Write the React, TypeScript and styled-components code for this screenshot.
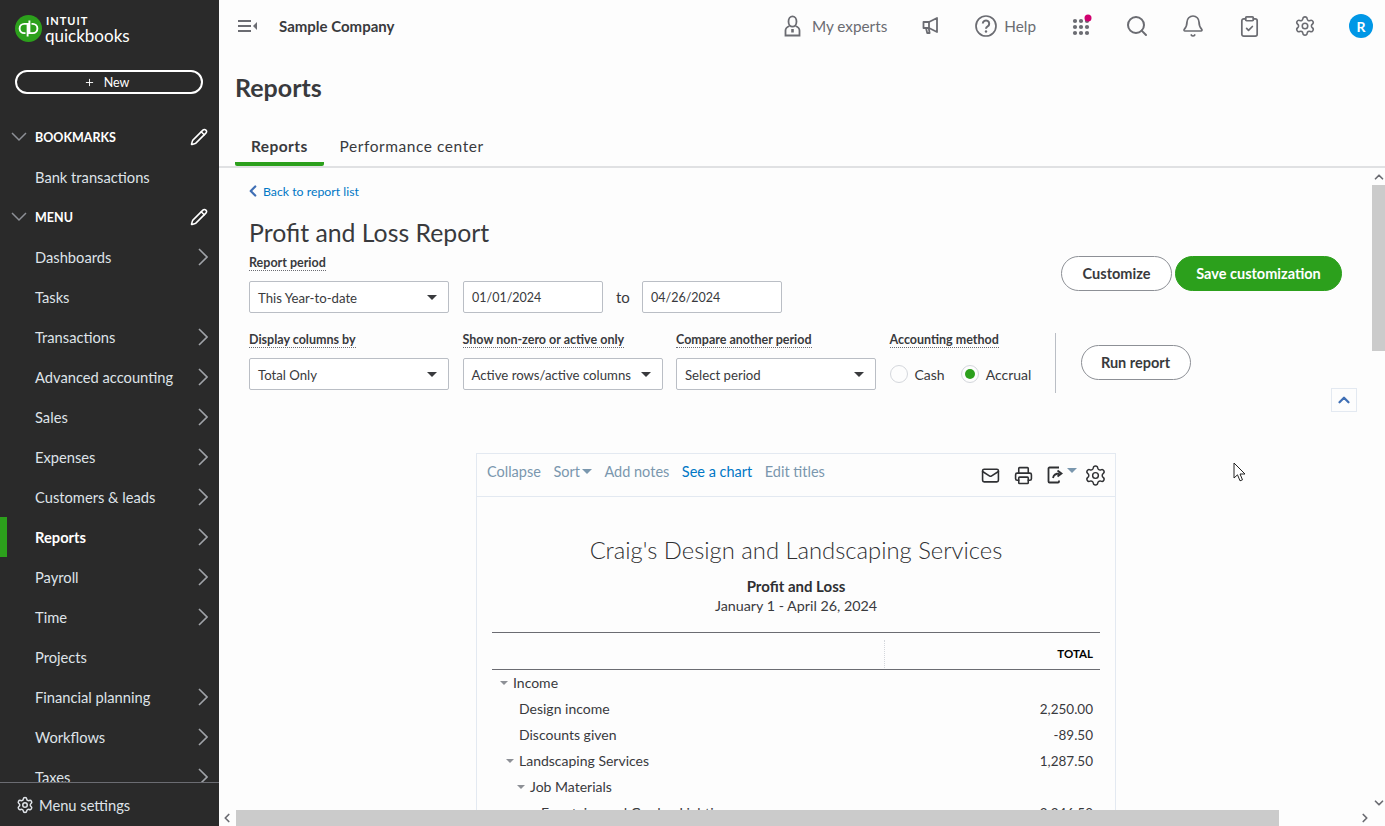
import React from 'react';
import styled, { createGlobalStyle } from 'styled-components';
import {
  Bell,
  ChevronDown,
  ChevronLeft,
  ChevronRight,
  ChevronUp,
  ClipboardCheck,
  Mail,
  Pencil,
  Plus,
  Printer,
  Search,
  Settings,
} from 'lucide-react';

const GlobalStyle = createGlobalStyle`
  html, body, #root {
    margin: 0;
    padding: 0;
    height: 100%;
  }
  body {
    font-family: Lato, "Open Sans", "Liberation Sans", sans-serif;
    color: #393a3d;
    background: #fdfdfd;
    overflow: hidden;
  }
  * { box-sizing: border-box; }
`;

const Page = styled.div`
  display: flex;
  height: 100vh;
  overflow: hidden;
`;

/* sidebar */
const Sidebar = styled.aside`
  width: 219px;
  flex-shrink: 0;
  background: #2a2a2a;
  color: #eceef1;
  display: flex;
  flex-direction: column;
`;

const LogoRow = styled.div`
  height: 70px;
  padding: 15px 0 0 15px;
  display: flex;
  gap: 3px;
  align-items: flex-start;
`;

const LogoText = styled.div`
  display: flex;
  flex-direction: column;
  color: #fff;
`;

const Intuit = styled.span`
  font-size: 11px;
  line-height: 12px;
  font-weight: 700;
  letter-spacing: 1px;
  margin-left: 1px;
`;

const QuickBooks = styled.span`
  font-size: 17px;
  line-height: 18px;
  font-weight: 400;
`;

const NewButton = styled.button`
  width: 188px;
  height: 24px;
  margin: 0 0 23px 15px;
  flex-shrink: 0;
  border: 2px solid #fff;
  border-radius: 12px;
  background: transparent;
  color: #fff;
  font: 400 12.5px Lato, sans-serif;
  display: flex;
  align-items: center;
  justify-content: center;
  gap: 9px;
  padding: 0 5px 0 0;
`;

const Nav = styled.nav`
  flex: 1;
  min-height: 0;
  overflow: hidden;
`;

const NavRow = styled.div<{ $active?: boolean }>`
  height: 40px;
  display: flex;
  align-items: center;
  justify-content: space-between;
  padding: 0 11px 1px 35px;
  font-size: 14.7px;
  font-weight: ${(p) => (p.$active ? 700 : 400)};
  color: ${(p) => (p.$active ? '#fff' : '#dfe3e8')};
  border-left: ${(p) => (p.$active ? '7px solid #2ca01c' : 'none')};
  padding-left: ${(p) => (p.$active ? '28px' : '35px')};
`;

const SectionRow = styled.div`
  height: 40px;
  display: flex;
  align-items: center;
  padding: 0 11px 0 11px;
  font-size: 12.5px;
  font-weight: 700;
  color: #fff;
`;

const SectionLabel = styled.span`
  flex: 1;
  margin-left: 8px;
`;

const MenuFooter = styled.div`
  height: 44px;
  flex-shrink: 0;
  border-top: 1px solid #6b6c72;
  display: flex;
  align-items: center;
  gap: 5px;
  padding-left: 16px;
  font-size: 14.7px;
  color: #dfe3e8;
`;

/* main */
const Main = styled.main`
  flex: 1;
  min-width: 0;
  display: flex;
  flex-direction: column;
  position: relative;
`;

const TopBar = styled.header`
  height: 52px;
  flex-shrink: 0;
  display: flex;
  align-items: center;
  padding: 0 12px 0 19px;
`;

const CompanyName = styled.span`
  margin-left: 21px;
  margin-bottom: 1px;
  font-size: 15px;
  font-weight: 700;
  color: #393a3d;
`;

const TopActions = styled.div`
  margin-left: auto;
  display: flex;
  align-items: center;
  gap: 32px;
  color: #6b6c72;
`;

const TopLink = styled.div<{ $gap: number; $end?: number }>`
  display: flex;
  align-items: center;
  gap: ${(p) => p.$gap}px;
  margin-right: ${(p) => p.$end ?? 0}px;
  font-size: 15.3px;
  line-height: 22px;
  color: #6b6c72;
`;

const IconSlot = styled.div`
  width: 24px;
  height: 24px;
  display: flex;
  align-items: center;
  justify-content: center;
  position: relative;
`;

const Avatar = styled.div`
  width: 24px;
  height: 24px;
  border-radius: 50%;
  background: #0097e6;
  color: #fff;
  font-size: 14px;
  font-weight: 700;
  display: flex;
  align-items: center;
  justify-content: center;
`;

const PageTitle = styled.h1`
  margin: 19px 0 0 16px;
  font-size: 25px;
  line-height: 32px;
  font-weight: 700;
  color: #393a3d;
`;

const Tabs = styled.div`
  margin-top: 25px;
  height: 40px;
  flex-shrink: 0;
  padding-left: 16px;
  display: flex;
  border-bottom: 2px solid #e0e1e3;
`;

const Tab = styled.div<{ $active?: boolean }>`
  padding: 8px 16px 0;
  height: 38px;
  font-size: 15.5px;
  line-height: 20px;
  letter-spacing: ${(p) => (p.$active ? '0.4px' : '0.55px')};
  font-weight: ${(p) => (p.$active ? 700 : 400)};
  color: #393a3d;
  border-bottom: 4px solid ${(p) => (p.$active ? '#2ca01c' : 'transparent')};
  border-radius: 0 0 2px 2px;
`;

const Body = styled.div`
  flex: 1;
  min-height: 0;
  display: flex;
`;

const Content = styled.div`
  flex: 1;
  min-width: 0;
  overflow: hidden;
  padding: 15px 0 0 30px;
`;

const BackLink = styled.div`
  display: flex;
  align-items: center;
  gap: 1px;
  height: 16px;
  font-size: 12.3px;
  color: #0077c5;
`;

const ReportTitle = styled.h2`
  margin: 18px 0 0;
  font-size: 24.8px;
  line-height: 32px;
  font-weight: 400;
  color: #393a3d;
`;

const TopFilters = styled.div`
  margin-top: 6px;
  display: flex;
  justify-content: space-between;
  align-items: flex-start;
  padding-right: 30px;
`;

const Label = styled.span`
  display: inline-block;
  height: 16px;
  padding-top: 1px;
  font-size: 12.5px;
  line-height: 14px;
  font-weight: 700;
  color: #393a3d;
  border-bottom: 1px dotted #6b6c72;
`;

const Field = styled.div<{ $width?: number }>`
  display: flex;
  flex-direction: column;
  align-items: flex-start;
  gap: 10px;
  width: ${(p) => (p.$width ? `${p.$width}px` : 'auto')};
`;

const ControlRow = styled.div`
  display: flex;
  align-items: center;
  gap: 14px;
`;

const Box = styled.div<{ $width: number }>`
  width: ${(p) => p.$width}px;
  height: 32px;
  border: 1px solid #babec5;
  border-radius: 2px;
  background: #fff;
  display: flex;
  align-items: center;
  justify-content: space-between;
  padding: 1px 11px 0 8px;
  font-size: 13.2px;
  color: #393a3d;
`;

const DateBox = styled(Box)`
  font-size: 12.5px;
  padding-top: 0;
`;

const Caret = styled.span<{ $size?: number; $color?: string }>`
  width: 0;
  height: 0;
  flex-shrink: 0;
  border-left: ${(p) => p.$size ?? 5}px solid transparent;
  border-right: ${(p) => p.$size ?? 5}px solid transparent;
  border-top: ${(p) => p.$size ?? 5}px solid ${(p) => p.$color ?? '#393a3d'};
`;

const ToText = styled.span`
  width: 13px;
  margin: 0 -1px;
  font-size: 15px;
  color: #393a3d;
  text-align: center;
`;

const Actions = styled.div`
  display: flex;
  gap: 3px;
  margin-top: 1px;
`;

const PillButton = styled.button<{ $primary?: boolean; $width: number }>`
  width: ${(p) => p.$width}px;
  height: 35px;
  border-radius: 18px;
  border: 1px solid ${(p) => (p.$primary ? '#2ca01c' : '#8d9096')};
  background: ${(p) => (p.$primary ? '#2ca01c' : '#fff')};
  color: ${(p) => (p.$primary ? '#fff' : '#393a3d')};
  font: 700 14.5px Lato, sans-serif;
  padding: 0;
`;

const BottomFilters = styled.div`
  margin-top: 19px;
  height: 80px;
  display: flex;
  align-items: flex-start;
  padding-right: 15px;
`;

const FieldGroup = styled.div`
  display: flex;
  gap: 13.5px;
`;

const Radios = styled.div`
  height: 32px;
  display: flex;
  align-items: center;
  font-size: 14px;
  color: #393a3d;
`;

const RadioDot = styled.span<{ $on?: boolean }>`
  width: 18px;
  height: 18px;
  border-radius: 50%;
  border: 1px solid #d4d7dc;
  margin: 0 7px 0 ${(p) => (p.$on ? 16 : 0)}px;
  display: flex;
  align-items: center;
  justify-content: center;
  &::after {
    content: '';
    width: 10px;
    height: 10px;
    border-radius: 50%;
    background: ${(p) => (p.$on ? '#2ca01c' : 'transparent')};
  }
`;

const VDivider = styled.div`
  width: 1px;
  height: 60px;
  margin: 1px 25px 0 22px;
  background: #babec5;
`;

const RunWrap = styled.div`
  margin-top: 13px;
`;

const CollapseUp = styled.div`
  width: 26px;
  height: 24px;
  margin-left: auto;
  align-self: flex-end;
  border: 1px solid #e3e9f1;
  display: flex;
  align-items: center;
  justify-content: center;
  color: #3f6fb5;
`;

const Card = styled.section`
  width: 640px;
  margin: 41px 0 0 227px;
  border: 1px solid #e3e9f1;
  border-bottom: none;
`;

const CardBar = styled.div`
  height: 43px;
  display: flex;
  align-items: center;
  gap: 12.5px;
  padding: 0 10px;
  border-bottom: 1px solid #e3e9f1;
  font-size: 14.5px;
`;

const BarLink = styled.span<{ $live?: boolean }>`
  color: ${(p) => (p.$live ? '#0077c5' : '#7a97ae')};
  display: flex;
  align-items: center;
  gap: 2px;
  margin-bottom: 7px;
`;

const BarIcons = styled.div`
  margin-left: auto;
  display: flex;
  align-items: center;
  gap: 14px;
  margin-right: -2px;
  color: #2f3033;
`;

const ShareGroup = styled.div`
  display: flex;
  align-items: flex-start;
  gap: 2px;
  margin-right: -7px;
`;

const ShareCaret = styled(Caret)`
  margin-top: 2px;
`;

const CardBody = styled.div`
  padding: 38px 15px 0;
  text-align: center;
`;

const Company = styled.div`
  font-size: 23.8px;
  line-height: 30px;
  font-weight: 300;
  color: #2f3033;
`;

const ReportName = styled.div`
  margin-top: 11px;
  font-size: 15px;
  line-height: 20px;
  font-weight: 700;
  color: #2f3033;
`;

const ReportDates = styled.div`
  margin-top: 1px;
  font-size: 14.3px;
  line-height: 18px;
  color: #393a3d;
`;

const TableHead = styled.div`
  margin-top: 17px;
  height: 38px;
  border-top: 1px solid #6b6c72;
  border-bottom: 1px solid #6b6c72;
  display: flex;
  justify-content: flex-end;
`;

const TotalCell = styled.div`
  width: 216px;
  margin-top: 7px;
  height: 28px;
  border-left: 1px dotted #d4d7dc;
  font-size: 11.5px;
  font-weight: 700;
  color: #000;
  display: flex;
  align-items: center;
  justify-content: flex-end;
  padding: 0 7px 2px 0;
`;

const Row = styled.div<{ $indent: number }>`
  height: 26px;
  display: flex;
  align-items: center;
  padding: 0 7px 1px ${(p) => p.$indent}px;
  font-size: 14px;
  color: #393a3d;
  text-align: left;
`;

const RowCaret = styled.span<{ $show: boolean }>`
  width: 8px;
  height: 0;
  margin-right: 5px;
  border-left: 4px solid transparent;
  border-right: 4px solid transparent;
  border-top: 4px solid ${(p) => (p.$show ? '#8d9096' : 'transparent')};
`;

const RowAmount = styled.span`
  margin-left: auto;
  font-size: 13.5px;
`;

const VBar = styled.div`
  width: 13px;
  flex-shrink: 0;
  display: flex;
  flex-direction: column;
  align-items: center;
  justify-content: space-between;
  color: #6b6c72;
  padding-top: 2px;
`;

const VThumb = styled.div`
  width: 13px;
  height: 166px;
  margin-top: 1px;
  background: #cbcbcb;
  flex-shrink: 0;
`;

const VTrack = styled.div`
  flex: 1;
  display: flex;
  flex-direction: column;
  align-items: center;
`;

const HBar = styled.div`
  height: 16px;
  flex-shrink: 0;
  display: flex;
  align-items: center;
  color: #6b6c72;
  background: #fdfdfd;
`;

const HThumb = styled.div`
  width: 1043px;
  height: 16px;
  background: #cbcbcb;
  margin: 0 79px 0 2px;
  flex-shrink: 0;
`;

const Pointer = styled.svg`
  position: absolute;
  left: 1014px;
  top: 462px;
`;

const bookmarks = ['Bank transactions'];
const menu: { name: string; more?: boolean; active?: boolean }[] = [
  { name: 'Dashboards', more: true },
  { name: 'Tasks' },
  { name: 'Transactions', more: true },
  { name: 'Advanced accounting', more: true },
  { name: 'Sales', more: true },
  { name: 'Expenses', more: true },
  { name: 'Customers & leads', more: true },
  { name: 'Reports', more: true, active: true },
  { name: 'Payroll', more: true },
  { name: 'Time', more: true },
  { name: 'Projects' },
  { name: 'Financial planning', more: true },
  { name: 'Workflows', more: true },
  { name: 'Taxes', more: true },
];

const rows = [
  { label: 'Income', indent: 8, caret: true, amount: '' },
  { label: 'Design income', indent: 14, caret: false, amount: '2,250.00' },
  { label: 'Discounts given', indent: 14, caret: false, amount: '-89.50' },
  { label: 'Landscaping Services', indent: 14, caret: true, amount: '1,287.50' },
  { label: 'Job Materials', indent: 25, caret: true, amount: '' },
  { label: 'Fountains and Garden Lighting', indent: 36, caret: false, amount: '2,246.50' },
];

const QbLogo = () => (
  <svg width="27" height="27" viewBox="0 0 27 27" fill="none">
    <circle cx="13.5" cy="13.5" r="13.5" fill="#2ca01c" />
    <path
      d="M12.6 21.500V8.900H9.200a4.600 4.600 0 0 0 0 9.200h1.300M14.400 5.500v12.600h3.400a4.600 4.600 0 0 0 0-9.200h-1.300"
      stroke="#fff"
      strokeWidth="1.900"
    />
  </svg>
);

const SectionChevron = () => (
  <svg width="16" height="10" viewBox="0 0 16 10" fill="none" stroke="#8d9096" strokeWidth="1.500">
    <path d="M1 1l7 7 7-7" />
  </svg>
);

const NavChevron = () => (
  <svg width="10" height="18" viewBox="0 0 10 18" fill="none" stroke="#a0a3a8" strokeWidth="1.600">
    <path d="M1 1l8 8-8 8" />
  </svg>
);

const CollapseMenuIcon = () => (
  <svg width="20" height="14" viewBox="0 0 20 14" fill="#6b6c72">
    <rect x="0" y="1" width="13" height="2" />
    <rect x="0" y="6" width="13" height="2" />
    <rect x="0" y="11" width="13" height="2" />
    <path d="M19 3v8l-4-4z" />
  </svg>
);

const ExpertIcon = () => (
  <svg width="17" height="22" viewBox="0 0 17 22" fill="none" stroke="#6b6c72" strokeWidth="1.800">
    <ellipse cx="8.500" cy="6.500" rx="4" ry="5.200" />
    <path d="M5.500 11C2.800 12 1.500 13.500 1.500 15.500v5h14v-5c0-2-1.300-3.500-4-4.500" />
    <path d="M8.500 14v3.500" strokeWidth="2.600" />
  </svg>
);

const MegaphoneIcon = () => (
  <svg width="18" height="20" viewBox="0 0 18 20" fill="none" stroke="#6b6c72" strokeWidth="1.800" strokeLinejoin="round">
    <path d="M1.500 6H7l8-4v14l-8-4H1.500z" />
    <path d="M7 6v6" />
    <path d="M4 12l1.200 5h2.400l-.8-4.600" />
  </svg>
);

const HelpIcon = () => (
  <svg width="22" height="22" viewBox="0 0 22 22" fill="none" stroke="#6b6c72" strokeWidth="1.700">
    <circle cx="11" cy="11" r="10" />
    <path d="M7.800 8.600a3.200 3.200 0 1 1 4.800 2.800c-1.100.6-1.600 1.200-1.600 2.400" strokeWidth="2" />
    <circle cx="11" cy="16.500" r="1.200" fill="#6b6c72" stroke="none" />
  </svg>
);

const AppsIcon = () => (
  <svg width="24" height="24" viewBox="0 0 24 24" fill="#6b6c72">
    {[7, 13, 19].map((y) =>
      [6, 12, 18].map((x) => <circle key={`${x}-${y}`} cx={x} cy={y} r="2.100" />),
    )}
    <circle cx="19" cy="4" r="3.500" fill="#d0006f" />
  </svg>
);

const ShareIcon = () => (
  <svg width="18" height="18" viewBox="0 0 18 18" fill="none" stroke="#2f3033" strokeWidth="1.800">
    <path d="M12 1.500H2.500a1 1 0 0 0-1 1v13a1 1 0 0 0 1 1H11a1 1 0 0 0 1-1v-1" />
    <path d="M6 12c.5-3 3-4.500 6.500-4.500M10.500 4.500l4 3-4 3" />
  </svg>
);

const App = () => {
  return (
    <Page>
      <GlobalStyle />
      <Sidebar>
        <LogoRow>
          <QbLogo />
          <LogoText>
            <Intuit>INTUIT</Intuit>
            <QuickBooks>quickbooks</QuickBooks>
          </LogoText>
        </LogoRow>
        <NewButton>
          <Plus size={11} />
          New
        </NewButton>
        <Nav>
          <SectionRow>
            <SectionChevron />
            <SectionLabel>BOOKMARKS</SectionLabel>
            <Pencil size={18} />
          </SectionRow>
          {bookmarks.map((b) => (
            <NavRow key={b}>{b}</NavRow>
          ))}
          <SectionRow>
            <SectionChevron />
            <SectionLabel>MENU</SectionLabel>
            <Pencil size={18} />
          </SectionRow>
          {menu.map((m) => (
            <NavRow key={m.name} $active={m.active}>
              {m.name}
              {m.more && <NavChevron />}
            </NavRow>
          ))}
        </Nav>
        <MenuFooter>
          <Settings size={18} />
          Menu settings
        </MenuFooter>
      </Sidebar>
      <Main>
        <TopBar>
          <CollapseMenuIcon />
          <CompanyName>Sample Company</CompanyName>
          <TopActions>
            <TopLink $gap={11}>
              <ExpertIcon />
              My experts
            </TopLink>
            <IconSlot>
              <MegaphoneIcon />
            </IconSlot>
            <TopLink $gap={7} $end={1}>
              <HelpIcon />
              Help
            </TopLink>
            <IconSlot>
              <AppsIcon />
            </IconSlot>
            <IconSlot>
              <Search size={24} strokeWidth={2} />
            </IconSlot>
            <IconSlot>
              <Bell size={24} strokeWidth={1.7} />
            </IconSlot>
            <IconSlot>
              <ClipboardCheck size={23} strokeWidth={1.8} />
            </IconSlot>
            <IconSlot>
              <Settings size={22} strokeWidth={1.7} />
            </IconSlot>
            <Avatar>R</Avatar>
          </TopActions>
        </TopBar>
        <PageTitle>Reports</PageTitle>
        <Tabs>
          <Tab $active>Reports</Tab>
          <Tab>Performance center</Tab>
        </Tabs>
        <Body>
          <Content>
            <BackLink>
              <ChevronLeft size={18} strokeWidth={3} color="#3f6fb5" style={{ marginLeft: -5 }} />
              Back to report list
            </BackLink>
            <ReportTitle>Profit and Loss Report</ReportTitle>
            <TopFilters>
              <Field>
                <Label>Report period</Label>
                <ControlRow>
                  <Box $width={200}>
                    This Year-to-date
                    <Caret />
                  </Box>
                  <DateBox $width={140}>01/01/2024</DateBox>
                  <ToText>to</ToText>
                  <DateBox $width={140}>04/26/2024</DateBox>
                </ControlRow>
              </Field>
              <Actions>
                <PillButton $width={111}>Customize</PillButton>
                <PillButton $primary $width={167}>Save customization</PillButton>
              </Actions>
            </TopFilters>
            <BottomFilters>
              <FieldGroup>
                <Field>
                  <Label>Display columns by</Label>
                  <Box $width={200}>
                    Total Only
                    <Caret />
                  </Box>
                </Field>
                <Field>
                  <Label>Show non-zero or active only</Label>
                  <Box $width={200}>
                    Active rows/active columns
                    <Caret />
                  </Box>
                </Field>
                <Field>
                  <Label>Compare another period</Label>
                  <Box $width={200}>
                    Select period
                    <Caret />
                  </Box>
                </Field>
                <Field $width={143}>
                  <Label>Accounting method</Label>
                  <Radios>
                    <RadioDot />
                    Cash
                    <RadioDot $on />
                    Accrual
                  </Radios>
                </Field>
              </FieldGroup>
              <VDivider />
              <RunWrap>
                <PillButton $width={110}>Run report</PillButton>
              </RunWrap>
              <CollapseUp>
                <ChevronUp size={18} strokeWidth={3} />
              </CollapseUp>
            </BottomFilters>
            <Card>
              <CardBar>
                <BarLink>Collapse</BarLink>
                <BarLink>
                  Sort
                  <Caret $color="#7a97ae" />
                </BarLink>
                <BarLink>Add notes</BarLink>
                <BarLink $live>See a chart</BarLink>
                <BarLink>Edit titles</BarLink>
                <BarIcons>
                  <Mail size={19} strokeWidth={2} />
                  <Printer size={19} strokeWidth={2} />
                  <ShareGroup>
                    <ShareIcon />
                    <ShareCaret $color="#7a97ae" />
                  </ShareGroup>
                  <Settings size={23} strokeWidth={1.5} />
                </BarIcons>
              </CardBar>
              <CardBody>
                <Company>Craig's Design and Landscaping Services</Company>
                <ReportName>Profit and Loss</ReportName>
                <ReportDates>January 1 - April 26, 2024</ReportDates>
                <TableHead>
                  <TotalCell>TOTAL</TotalCell>
                </TableHead>
                {rows.map((r) => (
                  <Row key={r.label} $indent={r.indent}>
                    <RowCaret $show={r.caret} />
                    {r.label}
                    <RowAmount>{r.amount}</RowAmount>
                  </Row>
                ))}
              </CardBody>
            </Card>
          </Content>
          <VBar>
            <VTrack>
              <ChevronUp size={14} strokeWidth={3} />
              <VThumb />
            </VTrack>
            <ChevronDown size={14} strokeWidth={3} />
          </VBar>
        </Body>
        <HBar>
          <ChevronLeft size={14} strokeWidth={3} style={{ marginLeft: 1 }} />
          <HThumb />
          <ChevronRight size={14} strokeWidth={3} />
        </HBar>
        <Pointer width="14" height="21" viewBox="0 0 14 21" fill="#fff" stroke="#222" strokeWidth="1">
          <path d="M1 1v15l3.500-3.200 2.500 6 2.500-1-2.500-5.800H12z" />
        </Pointer>
      </Main>
    </Page>
  );
};

export default App;
